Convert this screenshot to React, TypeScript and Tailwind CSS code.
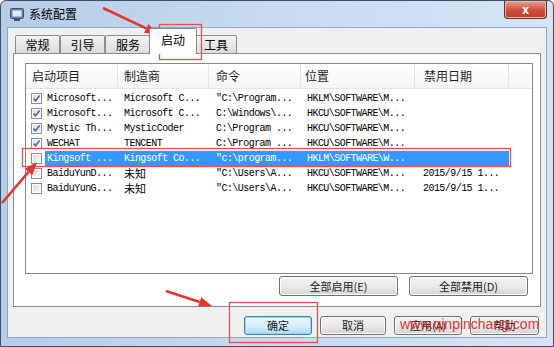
import React from 'react';

type Row = {
  on: boolean;
  name: string;
  maker: string;
  cmd: string;
  loc: string;
  date: string;
  selected?: boolean;
};

const rows: Row[] = [
  { on: true, name: 'Microsoft...', maker: 'Microsoft C...', cmd: '"C:\\Program...', loc: 'HKLM\\SOFTWARE\\M...', date: '' },
  { on: true, name: 'Microsoft...', maker: 'Microsoft C...', cmd: 'C:\\Windows\\...', loc: 'HKCU\\SOFTWARE\\M...', date: '' },
  { on: true, name: 'Mystic Th...', maker: 'MysticCoder', cmd: 'C:\\Program ...', loc: 'HKCU\\SOFTWARE\\M...', date: '' },
  { on: true, name: 'WECHAT', maker: 'TENCENT', cmd: 'C:\\Program ...', loc: 'HKCU\\SOFTWARE\\M...', date: '' },
  { on: false, name: 'Kingsoft ...', maker: 'Kingsoft Co...', cmd: '"c:\\program...', loc: 'HKLM\\SOFTWARE\\W...', date: '', selected: true },
  { on: false, name: 'BaiduYunD...', maker: '未知', cmd: '"C:\\Users\\A...', loc: 'HKCU\\SOFTWARE\\M...', date: '2015/9/15 1...' },
  { on: false, name: 'BaiduYunG...', maker: '未知', cmd: '"C:\\Users\\A...', loc: 'HKCU\\SOFTWARE\\M...', date: '2015/9/15 1...' },
];

const cjk = "font-['Noto_Sans_CJK_SC','Noto_Sans',sans-serif]";
const mono = "font-['Liberation_Mono','Noto_Sans_CJK_SC',monospace]";

const Check = ({ on }: { on: boolean }) => (
  <svg width="11" height="11" viewBox="0 0 11 11">
    <defs>
      <linearGradient id="cb" x1="0" y1="0" x2="1" y2="1">
        <stop offset="0" stopColor="#dcdcdc" />
        <stop offset="1" stopColor="#fbfbfb" />
      </linearGradient>
    </defs>
    <rect x="0.5" y="0.5" width="10" height="10" fill="#fff" stroke="#8e8f8f" />
    <rect x="2" y="2" width="7" height="7" fill="url(#cb)" />
    {on && <path d="M2.6 5.6 L4.6 7.8 L8.6 2.6" fill="none" stroke="#4a6cae" strokeWidth="1.7" />}
  </svg>
);

const Button = ({ label, w, primary }: { label: string; w: string; primary?: boolean }) => (
  <div
    className={`${w} flex items-center justify-center rounded-[3px] border text-[11px] text-[#1a1a1a] ${cjk} ${
      primary
        ? 'border-[#3c7fb1] bg-gradient-to-b from-[#eaf6fd] via-[#d9f0fc] to-[#a9daf5] shadow-[inset_0_0_0_1px_#9ad4f2]'
        : 'border-[#707070] bg-gradient-to-b from-[#f2f2f2] via-[#ebebeb] to-[#d4d4d4] shadow-[inset_0_0_0_1px_#fcfcfc]'
    }`}
  >
    {label}
  </div>
);

const Tab = ({ label, w, active }: { label: string; w: string; active?: boolean }) => (
  <div
    className={`${w} flex items-center justify-center border-l border-r border-t border-[#898c95] rounded-t-[2px] text-[12px] text-black ${cjk} ${
      active ? 'relative z-10 -mb-px -mx-[2px] h-[26px] bg-white pb-[4px]' : 'h-[18px] bg-gradient-to-b from-[#f3f3f3] to-[#dcdcdc]'
    }`}
  >
    {label}
  </div>
);

const arrow = (x1: number, y1: number, x2: number, y2: number) => {
  const a = Math.atan2(y2 - y1, x2 - x1);
  const len = 13;
  const half = 5;
  const bx = x2 - len * Math.cos(a);
  const by = y2 - len * Math.sin(a);
  const pts = [
    `${x2},${y2}`,
    `${bx + half * Math.sin(a)},${by - half * Math.cos(a)}`,
    `${bx - half * Math.sin(a)},${by + half * Math.cos(a)}`,
  ].join(' ');
  return (
    <g key={`${x1}-${y1}`}>
      <line x1={x1} y1={y1} x2={bx} y2={by} stroke="#e8332c" strokeWidth="2.5" />
      <polygon points={pts} fill="#e8332c" />
    </g>
  );
};

const App: React.FC = () => {
  return (
    <div className="relative w-[554px] h-[347px] overflow-hidden bg-white">
      <div className="flex h-full w-full flex-col rounded-t-[6px] border border-[#3f4e60] bg-gradient-to-r from-[#b5cde8] via-[#c8dbef] to-[#d5e5f5]">
        {/* title bar */}
        <div className="flex h-[26px] items-center pl-[9px]">
          <svg width="14" height="13" viewBox="0 0 14 13">
            <rect x="0.5" y="0.5" width="13" height="10" rx="1" fill="#6f86a8" stroke="#3d5273" />
            <rect x="2.5" y="2.5" width="9" height="6" fill="#dfe9f5" />
            <rect x="4" y="11" width="6" height="2" fill="#3d5273" />
          </svg>
          <span className={`ml-[5px] text-[12px] text-black ${cjk}`}>系统配置</span>
          <div className="ml-auto mr-[6px] -mt-[8px] flex h-[18px] w-[43px] items-center justify-center rounded-b-[4px] border border-t-0 border-[#6b2a22] bg-gradient-to-b from-[#e8a594] via-[#d0533d] to-[#c0392a] shadow-[inset_0_0_0_1px_#f0b8a8]">
            <span className="text-[12px] font-bold leading-none text-white font-['Liberation_Sans',sans-serif]">x</span>
          </div>
        </div>

        {/* client */}
        <div className="mx-[6px] flex h-[311px] flex-col border border-[#8da6c2] bg-[#f0f0f0] px-[5px]">
          <div className="flex h-[25px] items-end pl-[2px]">
            <Tab label="常规" w="w-[45px]" />
            <Tab label="引导" w="w-[45px]" />
            <Tab label="服务" w="w-[46px]" />
            <Tab label="启动" w="w-[48px]" active />
            <Tab label="工具" w="w-[42px]" />
          </div>

          <div className="flex h-[254px] flex-col border border-[#898c95] bg-white pl-[11px] pt-[9px]">
            <div className="flex h-[211px] w-[508px] flex-col border border-[#828790] bg-white">
              <div className={`flex h-[25px] border-b border-[#e5e5e5] bg-gradient-to-b from-white to-[#f4f5f7] text-[12px] text-[#1e1e1e] ${cjk}`}>
                <div className="flex w-[92px] items-center border-r border-[#e3e6ea] pl-[6px]">启动项目</div>
                <div className="flex w-[91px] items-center border-r border-[#e3e6ea] pl-[6px]">制造商</div>
                <div className="flex w-[92px] items-center border-r border-[#e3e6ea] pl-[7px]">命令</div>
                <div className="flex w-[114px] items-center border-r border-[#e3e6ea] pl-[4px]">位置</div>
                <div className="flex w-[94px] items-center border-r border-[#e3e6ea] pl-[9px]">禁用日期</div>
                <div className="flex-1" />
              </div>
              <div className="pt-[2px]">
                {rows.map((r, i) => (
                  <div key={i} className={`flex h-[15px] items-center overflow-hidden text-[10px] leading-[15px] tracking-[-0.55px] ${mono}`}>
                    <div className="flex w-[19px] items-center pl-[5px]">
                      <Check on={r.on} />
                    </div>
                    <div
                      className={`flex h-full w-[464px] items-center whitespace-nowrap ${
                        r.selected ? 'bg-[#3399ff] text-white' : 'text-black'
                      }`}
                    >
                      <div className="w-[73px] pl-[2px]">{r.name}</div>
                      <div className={`w-[91px] pl-[6px] ${r.maker === '未知' ? `text-[11px] leading-none tracking-normal ${cjk}` : ''}`}>{r.maker}</div>
                      <div className="w-[92px] pl-[7px]">{r.cmd}</div>
                      <div className="w-[114px] pl-[6px]">{r.loc}</div>
                      <div className="w-[94px] pl-[8px]">{r.date}</div>
                    </div>
                  </div>
                ))}
              </div>
            </div>
            <div className="mt-[2px] flex justify-end gap-[11px] pr-[12px]">
              <div className="h-[20px] w-[119px] flex">
                <Button label="全部启用(E)" w="w-full" />
              </div>
              <div className="h-[20px] w-[119px] flex">
                <Button label="全部禁用(D)" w="w-full" />
              </div>
            </div>
          </div>

          <div className="mt-[9px] flex h-[19px] justify-end gap-[8px] pr-[2px]">
            <Button label="确定" w="w-[68px]" primary />
            <Button label="取消" w="w-[66px]" />
            <Button label="应用(A)" w="w-[68px]" />
            <Button label="帮助" w="w-[69px]" />
          </div>
        </div>
      </div>

      {/* watermark */}
      <span className="pointer-events-none absolute left-[400px] top-[314px] text-[14px] text-[#e0241c] opacity-90 font-['Liberation_Sans',sans-serif]">
        www.qinpinchang.com
      </span>

      {/* annotations */}
      <svg className="pointer-events-none absolute left-0 top-0" width="554" height="347" viewBox="0 0 554 347">
        <rect x="159.5" y="24.5" width="42" height="35" fill="none" stroke="#e5504a" strokeWidth="1.3" />
        <rect x="22.5" y="148.5" width="488" height="18" fill="none" stroke="#e5504a" strokeWidth="1.3" />
        <rect x="229.5" y="302.5" width="88" height="40" fill="none" stroke="#e5504a" strokeWidth="1.3" />
        {arrow(103, 8, 158, 34)}
        {arrow(2, 203, 37, 162)}
        {arrow(166, 291, 212, 306)}
      </svg>
    </div>
  );
};

export default App;
